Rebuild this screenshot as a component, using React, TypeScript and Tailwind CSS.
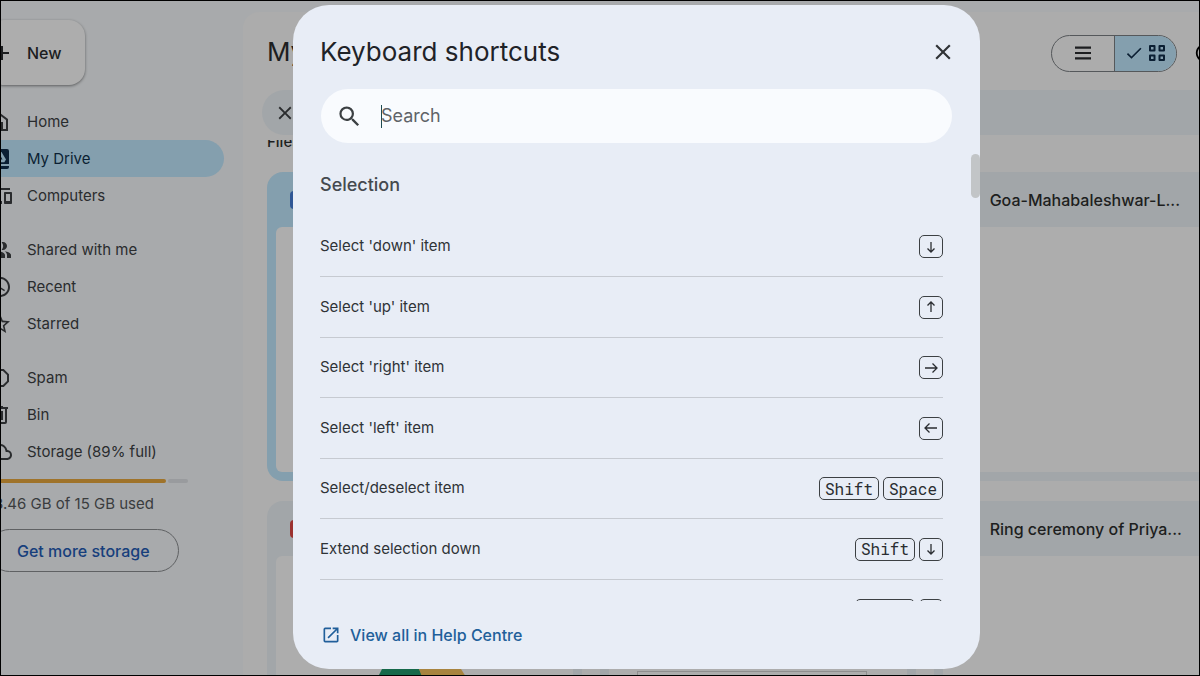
import { useState } from "react"
import type { ReactNode } from "react"
import type { IconType } from "react-icons"
import {
  MdAccessTime,
  MdAdd,
  MdCheck,
  MdClose,
  MdOpenInNew,
  MdOutlineCloud,
  MdOutlineDevices,
  MdOutlineInfo,
  MdOutlineReport,
  MdPeopleAlt,
  MdSearch,
  MdStarBorder,
} from "react-icons/md"

interface IconProps {
  className?: string
}

interface NavItem {
  label: string
  icon: IconType
  active?: boolean
}

interface Shortcut {
  label: string
  keys: string[]
}

function HomeIcon({ className }: IconProps) {
  return (
    <svg viewBox="0 0 24 24" className={className} fill="currentColor" aria-hidden="true">
      <path d="M4 21V9l8-6 8 6v12h-7v-7h-2v7H4Zm2-2h3v-7h6v7h3v-9l-6-4.500L6 10v9Z" />
    </svg>
  )
}

function DriveIcon({ className }: IconProps) {
  return (
    <svg viewBox="0 0 24 24" className={className} fill="currentColor" aria-hidden="true">
      <path
        fillRule="evenodd"
        d="M5 2h14a2 2 0 0 1 2 2v13H3V4a2 2 0 0 1 2-2Zm5.500 3L6 12.500l1.700 2.800h8.600L18 12.500 13.500 5h-3Zm1.500 3 2.500 4.500h-5L12 8Z"
      />
      <path d="M3 19h18v1a2 2 0 0 1-2 2H5a2 2 0 0 1-2-2v-1Z" />
    </svg>
  )
}

function BinIcon({ className }: IconProps) {
  return (
    <svg viewBox="0 0 24 24" className={className} fill="currentColor" aria-hidden="true">
      <path
        fillRule="evenodd"
        d="M7 21a2 2 0 0 1-2-2V6H4V4h5V3h6v1h5v2h-1v13a2 2 0 0 1-2 2H7ZM17 6H7v13h10V6ZM9 17h2V8H9v9Zm4 0h2V8h-2v9Z"
      />
    </svg>
  )
}

function ListIcon({ className }: IconProps) {
  return (
    <svg viewBox="0 0 18 18" className={className} stroke="currentColor" strokeWidth="2.400" aria-hidden="true">
      <path d="M0 3h18M0 9h18M0 15h18" />
    </svg>
  )
}

function GridIcon({ className }: IconProps) {
  return (
    <svg
      viewBox="0 0 18 18"
      className={className}
      fill="none"
      stroke="currentColor"
      strokeWidth="2"
      strokeLinejoin="round"
      aria-hidden="true"
    >
      <path d="M2 2h4.500v4.500H2zM11.500 2H16v4.500h-4.500zM2 11.500h4.500V16H2zM11.500 11.500H16V16h-4.500z" />
    </svg>
  )
}

const navGroups: NavItem[][] = [
  [
    { label: "Home", icon: HomeIcon },
    { label: "My Drive", icon: DriveIcon, active: true },
    { label: "Computers", icon: MdOutlineDevices },
  ],
  [
    { label: "Shared with me", icon: MdPeopleAlt },
    { label: "Recent", icon: MdAccessTime },
    { label: "Starred", icon: MdStarBorder },
  ],
  [
    { label: "Spam", icon: MdOutlineReport },
    { label: "Bin", icon: BinIcon },
    { label: "Storage (89% full)", icon: MdOutlineCloud },
  ],
]

const shortcuts: Shortcut[] = [
  { label: "Select 'down' item", keys: ["down"] },
  { label: "Select 'up' item", keys: ["up"] },
  { label: "Select 'right' item", keys: ["right"] },
  { label: "Select 'left' item", keys: ["left"] },
  { label: "Select/deselect item", keys: ["Shift", "Space"] },
  { label: "Extend selection down", keys: ["Shift", "down"] },
]

const arrows: Record<string, string> = {
  down: "M7 2v10M3.500 8.500 7 12l3.500-3.500",
  up: "M7 12V2M3.500 5.500 7 2l3.500 3.500",
  right: "M1 7h12M8.500 2.500 13 7l-4.500 4.500",
  left: "M13 7H1M5.500 2.500 1 7l4.500 4.500",
}

function Key({ name }: { name: string }) {
  return (
    <kbd className="flex h-[23px] items-center justify-center rounded-[5px] border border-[#3c4043] px-[5px] font-['Roboto_Mono','Liberation_Mono',monospace] text-base text-[#2a2d31]">
      {arrows[name] ? (
        <svg
          viewBox="0 0 14 14"
          className="-mx-px size-[14px]"
          fill="none"
          stroke="currentColor"
          strokeWidth="1.3"
          role="img"
          aria-label={`${name} arrow`}
        >
          <path d={arrows[name]} />
        </svg>
      ) : (
        name
      )}
    </kbd>
  )
}

function Sidebar() {
  return (
    <aside className="w-[242px] shrink-0 overflow-hidden">
      <div className="-ml-[13px] flex flex-col items-start pt-[19px]">
        <button className="flex h-[65px] items-center gap-[13px] rounded-2xl bg-[#adadad] pr-[23px] pl-0.5 text-base font-medium text-[#1c1d1f] shadow-[0_1px_3px_rgba(0,0,0,0.45)]">
          <MdAdd className="size-6" />
          New
        </button>
        <nav className="mt-[18px] flex w-[236px] flex-col gap-[17px]">
          {navGroups.map((group, index) => (
            <ul key={index}>
              {group.map(({ label, icon: Icon, active }) => (
                <li key={label}>
                  <a
                    href="#"
                    className={
                      active
                        ? "flex h-[37px] items-center gap-[15px] rounded-r-full bg-[#849fae] pt-px text-[15px] text-[#0b1f33]"
                        : "flex h-[37px] items-center gap-[15px] pt-px text-[15px] text-[#2a2c2e]"
                    }
                  >
                    <Icon className="size-6" />
                    {label}
                  </a>
                </li>
              ))}
            </ul>
          ))}
        </nav>
        <div className="mt-[9px] flex h-1 w-[200px] gap-0.5">
          <div className="w-[89%] rounded-full bg-[#9f732a]" />
          <div className="flex-1 rounded-full bg-[#999b9e]" />
        </div>
        <p className="mt-[9px] text-[15px] leading-6 text-[#3a3c3e]">13.46 GB of 15 GB used</p>
        <button className="mt-[13px] h-[43px] rounded-full border border-[#5f6163] px-7 text-base font-medium text-[#173f7c]">
          Get more storage
        </button>
      </div>
    </aside>
  )
}

interface FileCardProps {
  name?: string
  iconClass: string
  selected?: boolean
  children?: ReactNode
}

function FileCard({ name, iconClass, selected, children }: FileCardProps) {
  return (
    <article
      className={
        selected
          ? "flex h-[309px] flex-col overflow-hidden rounded-2xl bg-[#849fae] px-[9px] pb-[9px]"
          : "flex h-[309px] flex-col overflow-hidden rounded-2xl bg-[#a2a6a9] px-[9px] pb-[9px]"
      }
    >
      <header className="flex h-[55px] shrink-0 items-center gap-[15px] px-[14px]">
        <span className={iconClass} />
        {name && <h3 className="text-base font-medium whitespace-nowrap text-[#1d1e20]">{name}</h3>}
      </header>
      <div className="flex-1 overflow-hidden rounded-md bg-[#adadad]">{children}</div>
    </article>
  )
}

function Files() {
  return (
    <main className="mt-[11px] min-w-0 flex-1 overflow-hidden rounded-tl-2xl bg-[#acacac] pl-6">
      <div className="flex h-[78px] items-center justify-between pt-1">
        <h1 className="pb-[3px] text-[26px] text-[#1d1e20]">My Drive</h1>
        <div className="flex shrink-0 items-center gap-[17px]">
          <div className="flex h-[37px] w-[126px] overflow-hidden rounded-full border border-[#55585b] text-[#1d1e20]">
            <button aria-label="List layout" className="flex flex-1 items-center justify-center">
              <ListIcon className="size-4" />
            </button>
            <button
              aria-label="Grid layout"
              className="flex flex-1 items-center justify-center gap-1 border-l border-[#55585b] bg-[#849fae] text-[#0b1f33]"
            >
              <MdCheck className="size-5" />
              <GridIcon className="size-[18px]" />
            </button>
          </div>
          <button aria-label="View details" className="-mr-[17px]">
            <MdOutlineInfo className="size-[22px]" />
          </button>
        </div>
      </div>
      <div className="-ml-[5px] flex h-[45px] items-center rounded-l-full bg-[#a2a6a9] pl-3 text-[#2a2c2e]">
        <button aria-label="Clear selection">
          <MdClose className="size-[22px]" />
        </button>
      </div>
      <div className="mt-[5px] flex h-3 flex-col justify-end overflow-hidden">
        <h2 className="text-[15px] leading-5 font-medium text-[#1d1e20]">Files</h2>
      </div>
      <div className="-mr-[50px] mt-5 grid grid-cols-3 gap-x-[18px] gap-y-5">
        <FileCard iconClass="size-[18px] rounded-sm bg-[#2f5795]" selected />
        <FileCard iconClass="size-[18px] rounded-sm bg-[#2f5795]" />
        <FileCard name="Goa-Mahabaleshwar-L..." iconClass="size-[18px] rounded-sm bg-[#2f5795]" />
        <FileCard iconClass="size-[18px] rounded-sm bg-[#9c3230]">
          <svg viewBox="0 0 88 80" className="mt-[113px] ml-[102px] h-20 w-[88px]" aria-hidden="true">
            <path d="M4 0h37l44 80H0V8Z" fill="#16694a" />
            <path d="M41 0h42l5 8v72L44 8Z" fill="#a8843f" />
          </svg>
        </FileCard>
        <FileCard iconClass="size-[18px] rounded-sm bg-[#9c3230]">
          <div className="mt-[115px] mr-10 ml-7 h-20 border border-[#8e8e8e]" />
        </FileCard>
        <FileCard name="Ring ceremony of Priya..." iconClass="size-[18px] rounded-sm bg-[#9c3230]" />
      </div>
    </main>
  )
}

function ShortcutsDialog() {
  const [query, setQuery] = useState("")

  return (
    <section
      role="dialog"
      aria-labelledby="shortcuts-title"
      className="flex max-h-full w-[687px] flex-col overflow-hidden rounded-[36px] bg-[#e8edf6]"
    >
      <header className="flex items-center justify-between pt-[27px] pr-6 pl-[27px]">
        <h2 id="shortcuts-title" className="text-[26px] leading-10 text-[#1f2328]">
          Keyboard shortcuts
        </h2>
        <button aria-label="Close" className="text-[#303336]">
          <MdClose className="size-[26px]" />
        </button>
      </header>
      <label className="mx-7 mt-[17px] flex h-[54px] shrink-0 items-center gap-[18px] rounded-full bg-[#f9fbfe] pr-4 pl-[15px]">
        <MdSearch className="size-[27px] text-[#3c4043]" />
        <span className="sr-only">Search shortcuts</span>
        <span className="flex flex-1 items-center">
          <span className="h-[23px] w-px bg-[#1f4a50]" />
          <input
            type="text"
            value={query}
            onChange={(e) => setQuery(e.target.value)}
            placeholder="Search"
            className="-ml-px w-full bg-transparent text-lg text-[#1f2328] outline-none placeholder:text-[#5f6368]"
          />
        </span>
      </label>
      <div className="mt-[11px] flex min-h-0 flex-1 justify-between overflow-hidden pl-[27px]">
        <div className="flex-1">
          <h3 className="pt-[17px] pb-[18px] text-lg leading-7 font-medium text-[#454a4f]">Selection</h3>
          <ul>
            {shortcuts.map((shortcut) => (
              <li
                key={shortcut.label}
                className="flex items-center justify-between border-b border-[#c6cad1] text-[15px] text-[#2f3337] odd:h-[60px] even:h-[61px]"
              >
                {shortcut.label}
                <span className="flex gap-1">
                  {shortcut.keys.map((key) => (
                    <Key key={key} name={key} />
                  ))}
                </span>
              </li>
            ))}
            {/* next row, only the top of its keys shows above the footer */}
            <li aria-hidden="true" className="flex h-[60px] items-center justify-end gap-1">
              <span className="h-[23px] w-[60px] rounded-[5px] border border-[#3c4043]" />
              <span className="h-[23px] w-6 rounded-[5px] border border-[#3c4043]" />
            </li>
          </ul>
        </div>
        <div className="ml-7 h-11 w-[9px] rounded-full bg-[#c2c5c7]" />
      </div>
      <footer className="flex h-[68px] shrink-0 items-center pl-7">
        <a href="#" className="flex items-center gap-[9px] text-base font-medium text-[#215f9a]">
          <MdOpenInNew className="size-5" />
          View all in Help Centre
        </a>
      </footer>
    </section>
  )
}

export default function App() {
  return (
    <div className="relative flex h-screen overflow-hidden border border-black bg-[#a8aaac] font-[Inter,sans-serif]">
      <Sidebar />
      <Files />
      <div className="absolute inset-0 flex items-start justify-center pt-1 pb-1.5 pl-[73px]">
        <ShortcutsDialog />
      </div>
    </div>
  )
}
